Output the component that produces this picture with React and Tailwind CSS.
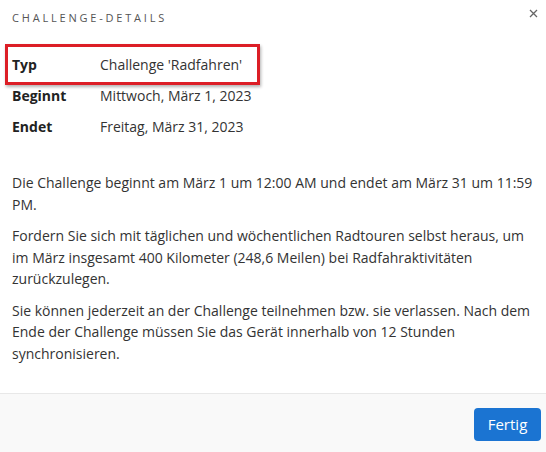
import React from 'react';

const rows = [
  { label: 'Typ', value: "Challenge 'Radfahren'" },
  { label: 'Beginnt', value: 'Mittwoch, März 1, 2023' },
  { label: 'Endet', value: 'Freitag, März 31, 2023' },
];

const App = () => {
  return (
    <div className="w-[546px] h-[452px] bg-white flex flex-col text-[#333] overflow-hidden" style={{ fontFamily: '"Open Sans", sans-serif' }}>
      <div className="relative flex-1 px-3">
        {/* header */}
        <div className="pt-[9px] h-[36px] flex justify-between">
          <h2 className="text-[11px] tracking-[2.8px] text-[#555] leading-[18px]">CHALLENGE-DETAILS</h2>
          <button className="text-[#666] -mr-[4px] -mt-[4px] h-4">
            <svg width="9" height="9" viewBox="0 0 9 9" stroke="currentColor" strokeWidth="1.3">
              <path d="M1 1 L8 8 M8 1 L1 8" />
            </svg>
          </button>
        </div>

        {/* details */}
        <div className="flex flex-col pt-[13px]">
          {rows.map((r) => (
            <div key={r.label} className="flex h-[31px] items-center text-[14px]">
              <span className="w-[88px] font-bold text-[#222]">{r.label}</span>
              <span className="text-[#333]">{r.value}</span>
            </div>
          ))}
        </div>

        {/* highlight box */}
        <div className="absolute left-[5px] top-[44px] w-[255px] h-[41px] border-[3px] border-[#dc1e26] shadow-[1px_2px_3px_rgba(0,0,0,0.3)]" />

        {/* text */}
        <div className="flex flex-col gap-[10px] mt-[30px] text-[14px] leading-[21.5px] text-[#333]">
          <p>Die Challenge beginnt am März 1 um 12:00 AM und endet am März 31 um 11:59 PM.</p>
          <p>Fordern Sie sich mit täglichen und wöchentlichen Radtouren selbst heraus, um im März insgesamt 400 Kilometer (248,6 Meilen) bei Radfahraktivitäten zurückzulegen.</p>
          <p>Sie können jederzeit an der Challenge teilnehmen bzw. sie verlassen. Nach dem Ende der Challenge müssen Sie das Gerät innerhalb von 12 Stunden synchronisieren.</p>
        </div>
      </div>

      {/* footer */}
      <div className="h-[59px] bg-[#f9f9f9] border-t border-[#e8e8e8] flex items-center justify-end pr-[5px]">
        <button className="w-[67px] h-[33px] rounded-[4px] bg-[#1b74d2] text-white text-[15px] mt-[2px]">Fertig</button>
      </div>
    </div>
  );
};

export default App;
